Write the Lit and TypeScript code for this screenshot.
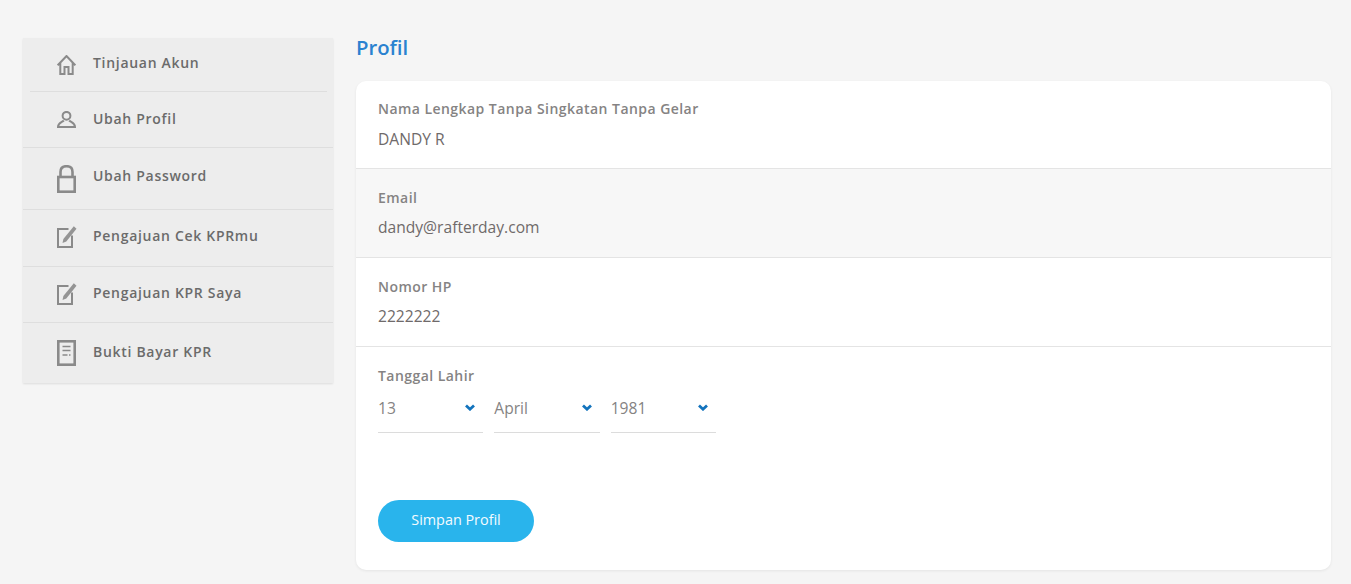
import { LitElement, html, css, svg } from 'lit';
import { customElement } from 'lit/decorators.js';

const icons = {
  home: svg`<path d="M.7 10.300 9.500 1l8.800 9.300M3.300 8v11h4.200v-7h4v7h4.200V8" />`,
  user: svg`<circle cx="9.500" cy="4.800" r="3.900" /><path d="M6.800 9.500C5.300 11.300 1 11.500 1 16h17c0-4.500-4.300-4.700-5.800-6.500" />`,
  lock: svg`<rect class="thick" x="1.300" y="12" width="16.400" height="14.700" /><path class="thick" d="M3.500 12V7C3.500 3 5.500 1.200 9.500 1.200s6 1.800 6 5.800v5" />`,
  edit: svg`<path d="M11.500 3H1v18h14V9.500" /><path class="solid" d="M16.800.300 19.500 2.800 9.300 15.400l-3.800 1.600.9-4z" />`,
  doc: svg`<rect class="thick" x="1.300" y="1.300" width="16.400" height="23.400" /><path class="thin" d="M5.500 6.500h8M5.500 10.500h8M5.500 15h5M12 15h1.500" />`,
};

type Nav = {
  label: string;
  icon: keyof typeof icons;
  w: number;
  h: number;
  height: number;
  textUp: number;
  iconUp?: number;
  inset?: boolean;
};

const nav: Nav[] = [
  { label: 'Tinjauan Akun', icon: 'home', w: 19, h: 20, height: 54, textUp: 6, inset: true },
  { label: 'Ubah Profil', icon: 'user', w: 19, h: 17, height: 56, textUp: 2 },
  { label: 'Ubah Password', icon: 'lock', w: 19, h: 28, height: 62, textUp: 6 },
  { label: 'Pengajuan Cek KPRmu', icon: 'edit', w: 20, h: 22, height: 57, textUp: 6, iconUp: 2 },
  { label: 'Pengajuan KPR Saya', icon: 'edit', w: 20, h: 22, height: 56, textUp: 4, iconUp: 1 },
  { label: 'Bukti Bayar KPR', icon: 'doc', w: 19, h: 26, height: 60, textUp: 4 },
];

const chevron = html`<svg class="chev" width="10" height="7" viewBox="0 0 10 7"><path d="M1 1.500 5 5.200 9 1.500" /></svg>`;

@customElement('app-root')
export class AppRoot extends LitElement {
  static styles = css`
    :host {
      display: block;
      height: 584px;
      overflow: hidden;
      background: #f5f5f5;
      font-family: 'Open Sans', sans-serif;
      color: #6f6c6c;
    }
    .page {
      display: flex;
      align-items: flex-start;
      gap: 23px;
      padding: 32px 20px 0 23px;
    }
    .side {
      flex: 0 0 310px;
      margin-top: 6px;
      background: #ededed;
      box-shadow: 0 1px 2px rgba(0, 0, 0, 0.1);
    }
    .nav-row {
      display: flex;
      align-items: center;
      box-sizing: border-box;
      padding-left: 34px;
      border-bottom: 1px solid #dedede;
      font-size: 14px;
      font-weight: 600;
      letter-spacing: 0.7px;
      color: #6b6b6b;
    }
    .nav-row:last-child {
      border-bottom: 0;
    }
    .nav-row.inset {
      border-bottom: 0;
      position: relative;
    }
    .nav-row.inset::after {
      content: '';
      position: absolute;
      left: 7px;
      right: 6px;
      bottom: 0;
      height: 1px;
      background: #dedede;
    }
    .icon-box {
      flex: 0 0 36px;
      display: flex;
    }
    .nav-row svg {
      fill: none;
      stroke: #8a8a8a;
      stroke-width: 2;
    }
    .nav-row svg .solid {
      fill: #949494;
      stroke: none;
    }
    .nav-row svg .thin {
      stroke-width: 1.500;
    }
    .nav-row svg .thick {
      stroke-width: 2.600;
    }
    .main {
      flex: 1;
      min-width: 0;
    }
    h1 {
      margin: 0 0 19px;
      font-size: 20.300px;
      line-height: 30px;
      font-weight: 600;
      color: #2a82d0;
    }
    .card {
      height: 489px;
      background: #fff;
      border-radius: 10px;
      box-shadow: 0 1px 3px rgba(0, 0, 0, 0.07);
      overflow: hidden;
    }
    .field {
      box-sizing: border-box;
      height: 89px;
      padding: 19px 22px 0;
      border-bottom: 1px solid #e4e4e4;
    }
    .field.first {
      height: 88px;
      padding-top: 18px;
    }
    .field.first .value {
      margin-top: 9px;
    }
    .field.alt {
      background: #f7f7f7;
    }
    .field.plain {
      border-bottom: 0;
    }
    .label {
      font-size: 14px;
      line-height: 20px;
      font-weight: 600;
      letter-spacing: 0.45px;
      color: #858383;
    }
    .value {
      margin-top: 8px;
      font-size: 15.600px;
      line-height: 22px;
      color: #6f6a6a;
    }
    .selects {
      display: flex;
      gap: 11px;
      margin-top: 1px;
    }
    .select {
      box-sizing: border-box;
      width: 105.330px;
      height: 46px;
      display: flex;
      align-items: center;
      justify-content: space-between;
      padding: 0 8px 4px 0;
      border-bottom: 1px solid #dcdcdc;
      font-size: 15.600px;
      color: #858383;
    }
    .chev {
      fill: none;
      stroke: #1273bd;
      stroke-width: 2.800;
    }
    .save {
      display: block;
      width: 156px;
      height: 42px;
      margin: 64px 0 0 22px;
      padding: 0 0 4px;
      border: 0;
      border-radius: 21px;
      background: #29b4ec;
      color: #f4fbff;
      font: 400 14.400px 'Open Sans', sans-serif;
    }
  `;

  render() {
    return html`
      <div class="page">
        <nav class="side">
          ${nav.map(
            (n) => html`
              <div class="nav-row ${n.inset ? 'inset' : ''}" style="height:${n.height}px">
                <span class="icon-box" style="margin-bottom:${n.iconUp ?? 0}px">
                  <svg width=${n.w} height=${n.h} viewBox="0 0 ${n.w} ${n.h}">${icons[n.icon]}</svg>
                </span>
                <span style="margin-bottom:${n.textUp}px">${n.label}</span>
              </div>
            `
          )}
        </nav>
        <main class="main">
          <h1>Profil</h1>
          <section class="card">
            <div class="field first">
              <div class="label">Nama Lengkap Tanpa Singkatan Tanpa Gelar</div>
              <div class="value">DANDY R</div>
            </div>
            <div class="field alt">
              <div class="label">Email</div>
              <div class="value">dandy@rafterday.com</div>
            </div>
            <div class="field">
              <div class="label">Nomor HP</div>
              <div class="value">2222222</div>
            </div>
            <div class="field plain">
              <div class="label">Tanggal Lahir</div>
              <div class="selects">
                <div class="select">13 ${chevron}</div>
                <div class="select">April ${chevron}</div>
                <div class="select">1981 ${chevron}</div>
              </div>
            </div>
            <button class="save">Simpan Profil</button>
          </section>
        </main>
      </div>
    `;
  }
}
